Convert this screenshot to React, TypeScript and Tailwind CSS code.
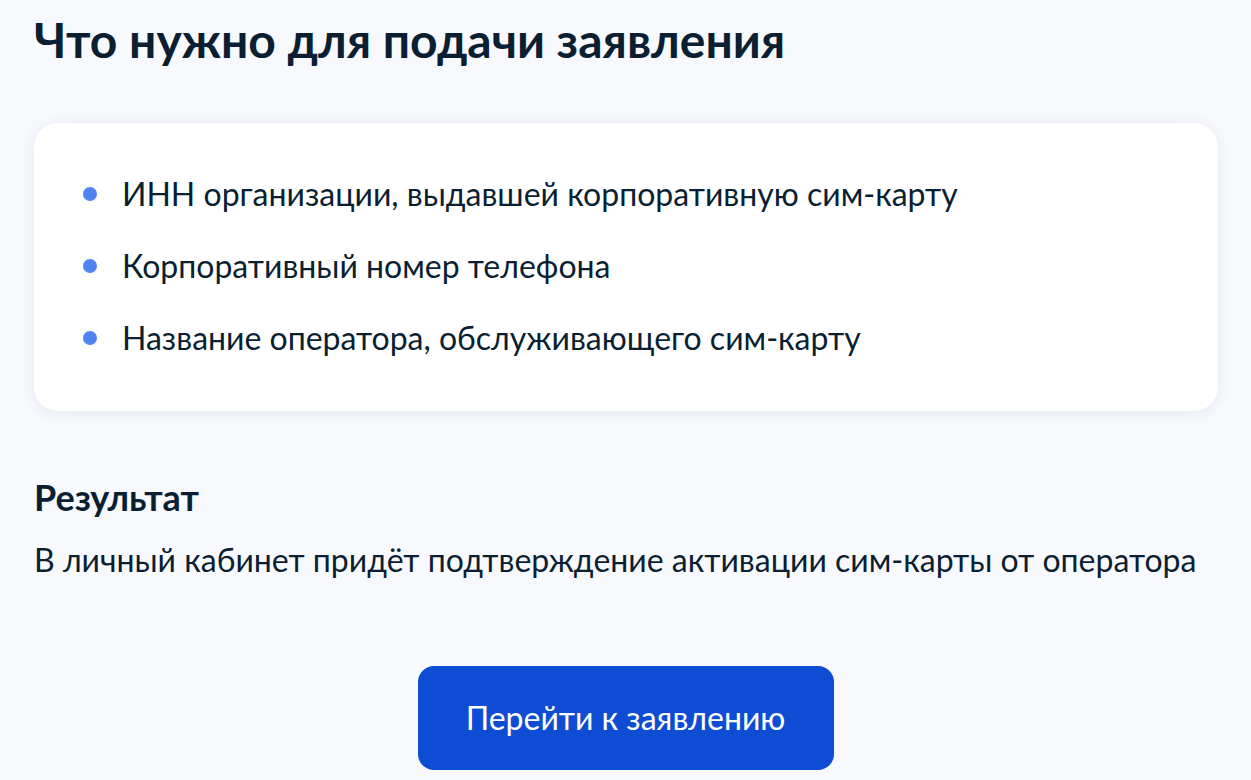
const items = [
  'ИНН организации, выдавшей корпоративную сим-карту',
  'Корпоративный номер телефона',
  'Название оператора, обслуживающего сим-карту',
];

export default function App() {
  return (
    <div
      className="min-h-[780px] bg-[#f8f9fd] px-[34px] pt-[10px] text-[#0b1f33]"
      style={{ fontFamily: 'Lato, "Noto Sans", sans-serif' }}
    >
      <h1 className="text-[48px] font-bold leading-[60px]">Что нужно для подачи заявления</h1>

      <div className="mt-[53px] w-[1184px] rounded-[24px] bg-white px-[48px] pt-[52px] pb-[54px] shadow-[0_2px_14px_rgba(104,128,178,0.14)]">
        <ul className="flex flex-col gap-[34px]">
          {items.map((text) => (
            <li key={text} className="flex items-center text-[32px] leading-[38px]">
              <span className="ml-[1px] mr-[25px] h-[14px] w-[14px] shrink-0 rounded-full bg-[#5283f0]" />
              {text}
            </li>
          ))}
        </ul>
      </div>

      <h2 className="mt-[65px] text-[36px] font-bold leading-[42px]">Результат</h2>
      <p className="mt-[23px] text-[32px] leading-[38px]">
        В личный кабинет придёт подтверждение активации сим-карты от оператора
      </p>

      <div className="mt-[87px] flex justify-center">
        <button className="h-[104px] w-[416px] rounded-[16px] bg-[#0d4cd3] text-[32px] text-white">
          Перейти к заявлению
        </button>
      </div>
    </div>
  );
}
